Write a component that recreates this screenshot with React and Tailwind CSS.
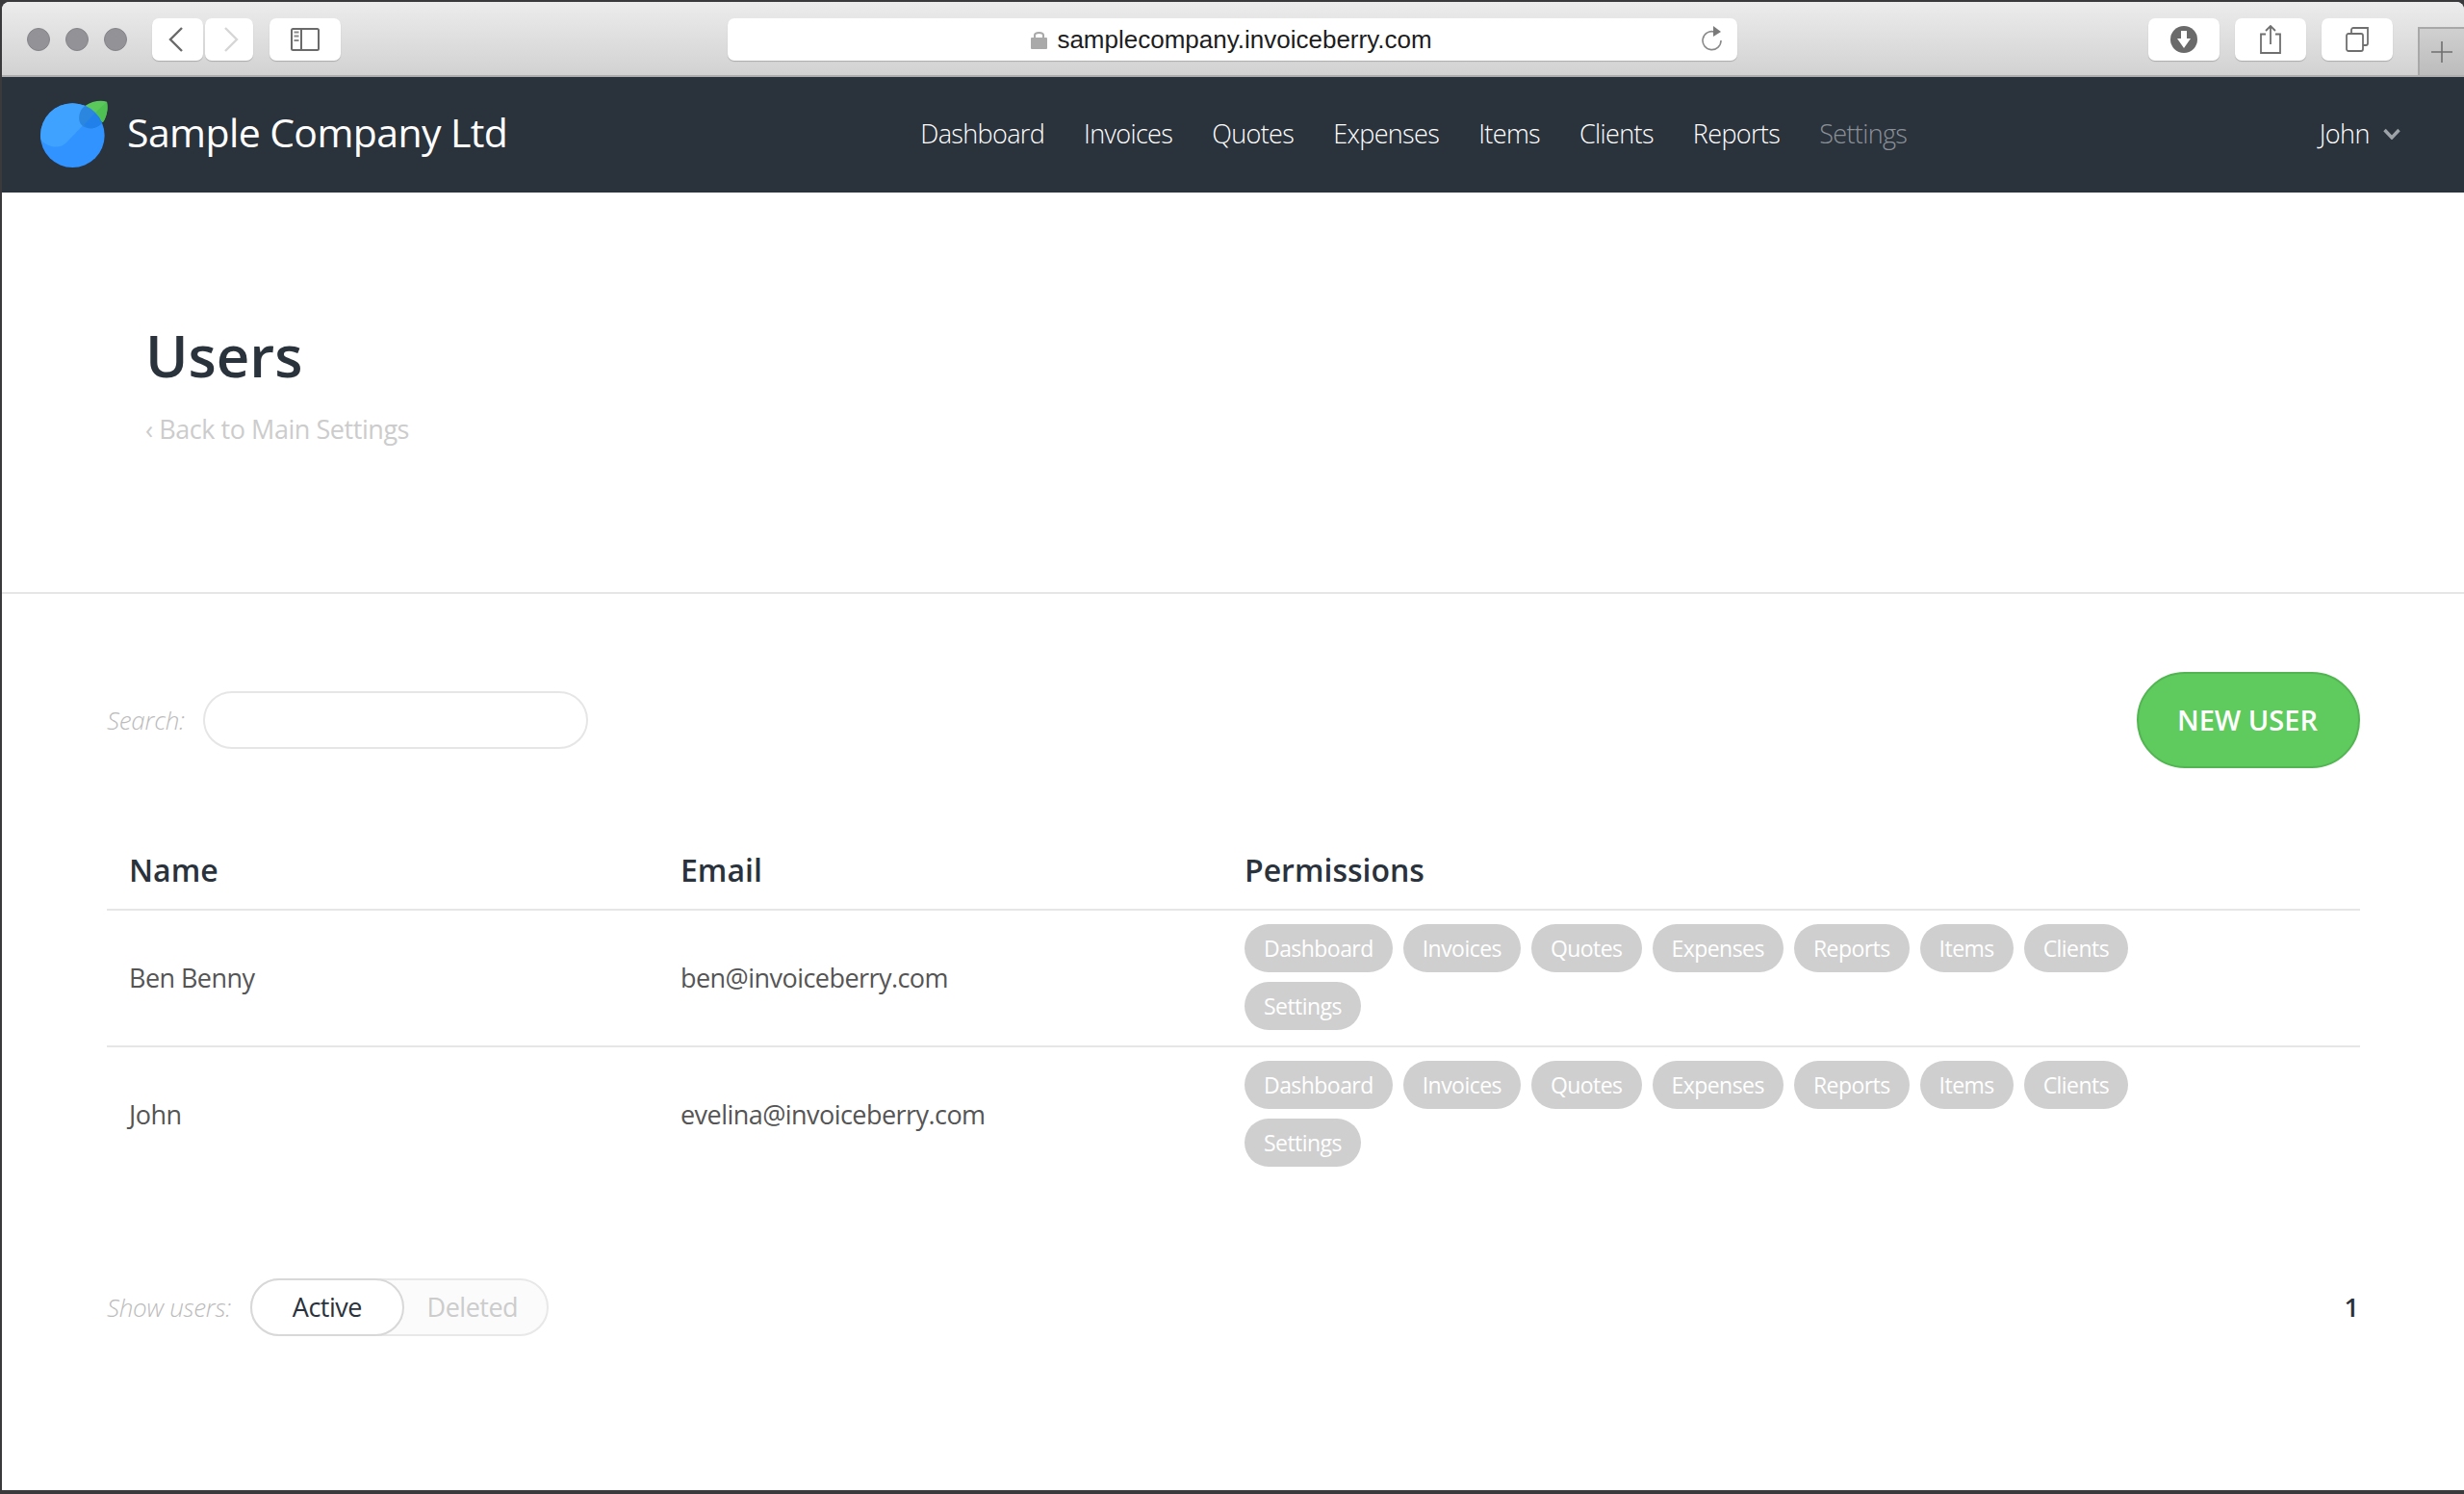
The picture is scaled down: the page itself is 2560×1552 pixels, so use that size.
import React from 'react';

const OPEN = "font-['Open_Sans',sans-serif]";

const navItems = ['Dashboard', 'Invoices', 'Quotes', 'Expenses', 'Items', 'Clients', 'Reports'];
const perms = ['Dashboard', 'Invoices', 'Quotes', 'Expenses', 'Reports', 'Items', 'Clients', 'Settings'];
const users = [
  { name: 'Ben Benny', email: 'ben@invoiceberry.com' },
  { name: 'John', email: 'evelina@invoiceberry.com' },
];

const ToolButton = ({ className, children }) => (
  <div className={`h-[44px] flex items-center justify-center rounded-[7px] bg-white shadow-[0_1px_1px_rgba(0,0,0,0.2)] ${className}`}>
    {children}
  </div>
);

const Logo = () => (
  <svg width="100" height="90" viewBox="0 0 300 270" className="shrink-0">
    <defs>
      <clipPath id="berry"><circle cx="136" cy="137" r="100" /></clipPath>
    </defs>
    <path d="M175 45 C195 30 225 25 243 32 C248 55 242 80 230 97 Z" fill="#5ac85a" />
    <path d="M205 68 L243 32 C248 55 242 80 230 97 Z" fill="#4fc052" />
    <circle cx="136" cy="137" r="100" fill="#3093ff" />
    <g clipPath="url(#berry)">
      <path d="M205 68 L118 158 C100 178 65 180 36 150 L20 20 L205 20 Z" fill="#3fa2ff" />
      <path d="M175 45 C160 55 155 75 157 90 C160 110 185 120 205 113 C215 110 225 103 230 97 L240 30 Z" fill="#2a86de" />
      <path d="M205 68 L172 104 C182 116 195 116 205 113 C215 110 225 103 235 92 Z" fill="#2180ea" />
    </g>
  </svg>
);

export default function App() {
  return (
    <div className={`h-[1552px] bg-[#3a3a3c] pt-[2px] pb-[4px] flex flex-col overflow-hidden ${OPEN}`}>
      <div className="flex-1 flex flex-col rounded-t-[8px] overflow-hidden bg-white ml-[2px]">
        {/* browser toolbar */}
        <div className="relative h-[78px] shrink-0 flex items-center bg-gradient-to-b from-[#ececec] to-[#d2d2d2] border-b-2 border-[#aeaeae] pt-[2px]">
          <div className="flex gap-[16px] ml-[26px]">
            <span className="w-[24px] h-[24px] rounded-full bg-[#939296] border border-[#85848a]" />
            <span className="w-[24px] h-[24px] rounded-full bg-[#939296] border border-[#85848a]" />
            <span className="w-[24px] h-[24px] rounded-full bg-[#939296] border border-[#85848a]" />
          </div>
          <ToolButton className="w-[53px] ml-[26px] pr-[4px]">
            <svg width="16" height="26" viewBox="0 0 16 26" fill="none" stroke="#6a6a6a" strokeWidth="2.4"><path d="M14 1 L2 13 L14 25" /></svg>
          </ToolButton>
          <ToolButton className="w-[50px] ml-[2px] pl-[3px]">
            <svg width="16" height="26" viewBox="0 0 16 26" fill="none" stroke="#d6d6d6" strokeWidth="2.4"><path d="M2 1 L14 13 L2 25" /></svg>
          </ToolButton>
          <ToolButton className="w-[74px] ml-[17px]">
            <svg width="30" height="24" viewBox="0 0 30 24" fill="none" stroke="#6a6a6a" strokeWidth="2">
              <rect x="1" y="1" width="28" height="22" rx="1.5" />
              <path d="M11 1 V23" />
              <path d="M3.5 4.5 H8.5 M3.5 8.5 H8.5 M3.5 13 H8.5" strokeWidth="1.8" stroke="#8a8a8a" />
            </svg>
          </ToolButton>
          <ToolButton className="w-[1049px] ml-[402px] relative">
            <div className="flex items-center gap-[10px] ml-[-2px] font-['Liberation_Sans',sans-serif] text-[26px] text-[#1d1d1d]">
              <svg width="17" height="20" viewBox="0 0 17 20" fill="none">
                <path d="M4 9 V5.5 C4 2 13 2 13 5.5 V9" stroke="#a9a9a9" strokeWidth="2" />
                <rect x="0" y="8" width="17" height="12" rx="1" fill="#a9a9a9" />
              </svg>
              <span>samplecompany.invoiceberry.com</span>
            </div>
            <svg className="absolute right-[14px] top-[8px]" width="24" height="28" viewBox="0 0 24 28" fill="none">
              <path d="M14 6 A9.5 9.5 0 1 0 21 15" stroke="#8a8a8a" strokeWidth="1.6" />
              <path d="M13 0 L21 6 L13 11 Z" fill="#7a7a7a" />
            </svg>
          </ToolButton>
          <ToolButton className="w-[74px] ml-[427px]">
            <svg width="28" height="28" viewBox="0 0 28 28">
              <circle cx="14" cy="14" r="14" fill="#6a6a6a" />
              <path d="M11 5 H17 V13 H21 L14 23 L7 13 H11 Z" fill="#fff" />
            </svg>
          </ToolButton>
          <ToolButton className="w-[74px] ml-[16px]">
            <svg width="24" height="30" viewBox="0 0 24 30" fill="none" stroke="#6f6f6f" strokeWidth="1.8">
              <path d="M7 9.5 H2 V29 H22 V9.5 H17" />
              <path d="M12 20 V1.5 M7 6 L12 1 L17 6" />
            </svg>
          </ToolButton>
          <ToolButton className="w-[74px] ml-[16px]">
            <svg width="24" height="26" viewBox="0 0 24 26" fill="none" stroke="#6f6f6f" strokeWidth="1.8">
              <rect x="1" y="7" width="17" height="18" rx="2" />
              <path d="M6 7 V3 C6 2 7 1 8 1 H23 V17 C23 18 22 19 21 19 H18" />
            </svg>
          </ToolButton>
          <div className="absolute right-0 bottom-0 w-[48px] h-[50px] bg-gradient-to-b from-[#d0d0d0] to-[#bcbcbc] border-l-2 border-t-2 border-[#a8a8a8] flex items-center justify-center">
            <svg width="22" height="22" viewBox="0 0 22 22" stroke="#6f6f6f" strokeWidth="1.6"><path d="M11 0 V22 M0 11 H22" /></svg>
          </div>
        </div>

        {/* app nav */}
        <header className="relative h-[120px] shrink-0 bg-[#2a323c] flex items-center text-white">
          <div className="flex items-center ml-[28px]">
            <Logo />
            <span className="ml-[2px] mt-[-5px] text-[41px] leading-none font-normal tracking-[-0.6px]">Sample Company Ltd</span>
          </div>
          <nav className="flex gap-[41px] ml-[429px] mt-[-2px] text-[27px] font-[350] tracking-[-0.65px]">
            {navItems.map((n) => (
              <span key={n}>{n}</span>
            ))}
            <span className="text-[#8a9097]">Settings</span>
          </nav>
          <div className="flex items-center gap-[14px] ml-auto mr-[66px] mt-[-2px] text-[27px] font-[350] tracking-[-0.5px]">
            <span>John</span>
            <svg width="18" height="12" viewBox="0 0 18 12" fill="none" stroke="#9ea3a8" strokeWidth="3.4"><path d="M1.5 2 L9 10 L16.5 2" /></svg>
          </div>
        </header>

        {/* title */}
        <div className="h-[417px] shrink-0 border-b-2 border-[#e6e6e6] pl-[149px] pt-[129px]">
          <h1 className="text-[60px] leading-[80px] font-semibold text-[#2a323c]">Users</h1>
          <a className="block mt-[17px] text-[27px] leading-[40px] text-[#cccccc] tracking-[-0.45px]">‹ Back to Main Settings</a>
        </div>

        {/* content */}
        <main className="flex-1 pl-[109px] pr-[108px]">
          <div className="flex items-center justify-between mt-[81px]">
            <div className="flex items-center gap-[19px]">
              <label className="text-[26px] italic font-light text-[#bbbbbb] tracking-[-0.25px]">Search:</label>
              <input className="w-[400px] h-[60px] rounded-full border-2 border-[#e6e6e6] bg-white outline-none px-6" />
            </div>
            <button className="w-[232px] h-[100px] pr-[2px] rounded-full bg-[#5fca5e] border-2 border-[#52b552] text-white text-[29px] font-semibold">
              NEW USER
            </button>
          </div>

          <table className="w-full mt-[60px] border-collapse text-left">
            <thead>
              <tr className="border-b-2 border-[#e6e6e6] h-[87px] text-[32px] font-semibold text-[#2a323c]">
                <th className="w-[596px] pl-[23px] pt-[6px] font-semibold">Name</th>
                <th className="w-[586px] pt-[6px] font-semibold">Email</th>
                <th className="pt-[6px] font-semibold">Permissions</th>
              </tr>
            </thead>
            <tbody className="text-[27px] text-[#555555] tracking-[-0.55px]">
              {users.map((u, i) => (
                <tr key={u.email} className={i === 0 ? 'border-b-2 border-[#e6e6e6]' : ''}>
                  <td className="pl-[23px]">{u.name}</td>
                  <td>{u.email}</td>
                  <td className="pt-[14px] pb-[16px]">
                    <div className="flex flex-wrap gap-x-[11px] gap-y-[10px] w-[960px]">
                      {perms.map((p) => (
                        <span key={p} className="h-[50px] px-[20px] flex items-center rounded-full bg-[#cfcfcf] text-white text-[23px] tracking-[-0.55px]">
                          {p}
                        </span>
                      ))}
                    </div>
                  </td>
                </tr>
              ))}
            </tbody>
          </table>

          <div className="flex items-center justify-between mt-[100px]">
            <div className="flex items-center gap-[20px]">
              <span className="text-[26px] italic font-light text-[#bbbbbb] tracking-[-0.3px]">Show users:</span>
              <div className="flex h-[60px] w-[310px] rounded-full border-2 border-[#e8e8e8] bg-[#fbfbfb] text-[27px] tracking-[-0.5px]">
                <span className="w-[160px] h-[60px] mt-[-2px] ml-[-2px] rounded-full border-2 border-[#d8d8d8] bg-white flex items-center justify-center text-[#2a323c]">Active</span>
                <span className="flex-1 flex items-center justify-center text-[#cccccc] pr-[6px]">Deleted</span>
              </div>
            </div>
            <span className="text-[27px] font-semibold text-[#2a323c] mr-[1px]">1</span>
          </div>
        </main>
      </div>
    </div>
  );
}
